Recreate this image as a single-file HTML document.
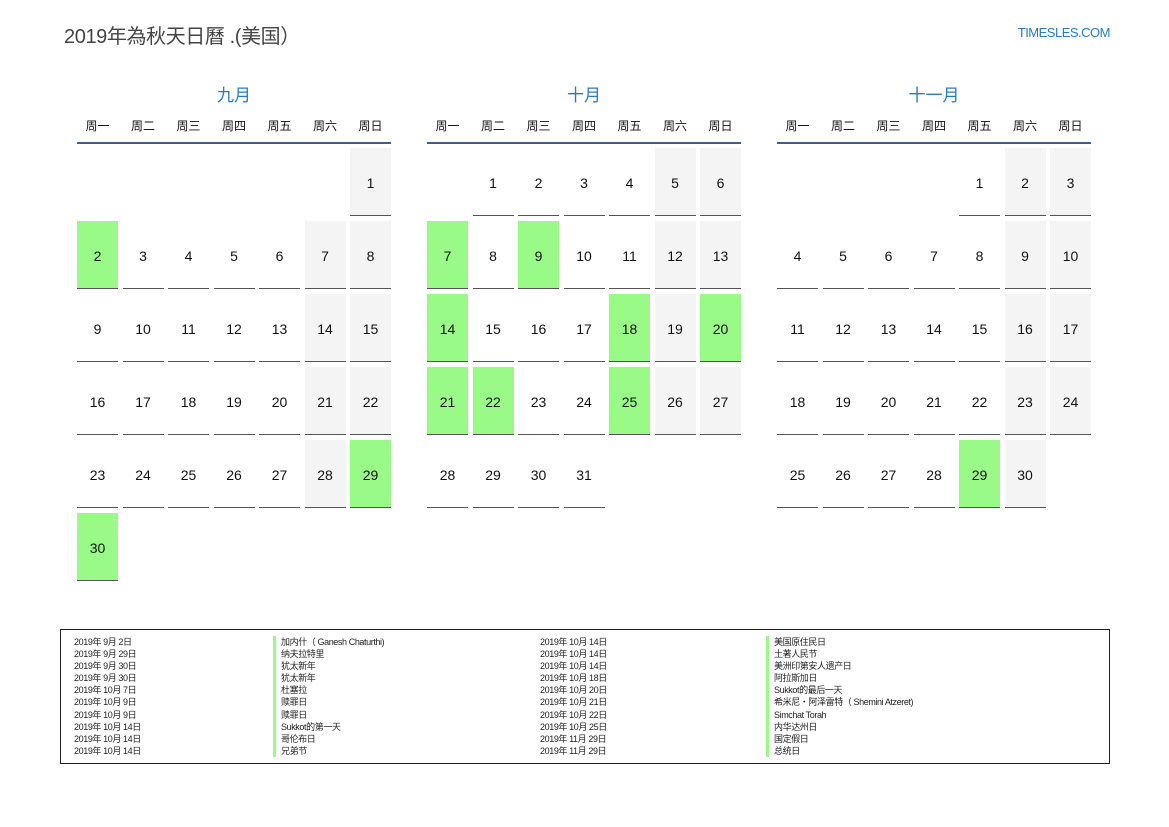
<!DOCTYPE html>
<html><head><meta charset="utf-8"><style>
*{margin:0;padding:0;box-sizing:border-box}
body{width:1169px;height:827px;background:#fff;font-family:"Liberation Sans","Noto Sans CJK SC",sans-serif;position:relative;overflow:hidden;color:#111}
.title{position:absolute;left:64px;top:20px;font-size:20px;color:#444;letter-spacing:-0.4px}
.site{position:absolute;right:59px;top:25px;font-size:13px;color:#2a7ac0;letter-spacing:-0.5px}
.m{position:absolute;top:84px;width:314px}
.mt{text-align:center;font-size:17px;color:#2a7ac0;height:24px;line-height:24px}
.wd{display:grid;grid-template-columns:repeat(7,41px);column-gap:4.5px;margin-top:10px;font-size:12px;text-align:center;height:16px;line-height:16px}
.ln{height:2px;background:#3d5f8a;margin-top:8px}
.g7{display:grid;grid-template-columns:repeat(7,41px);column-gap:4.5px;row-gap:5px;grid-auto-rows:68px;margin-top:4px}
.c{border-bottom:1.5px solid #555;display:flex;align-items:center;justify-content:center;font-size:14px;padding-top:2px}
.w{background:#f4f4f4}
.g{background:#99fa88}
.lg{position:absolute;left:60px;top:629px;width:1050px;height:135px;border:1px solid #222}
.col{position:absolute;top:6px;font-size:9px;line-height:12.1px;color:#222;letter-spacing:-0.4px}
.bar{border-left:3px solid #99fa88;padding-left:5px}
</style></head><body>
<div class="title">2019年為秋天日曆 .(美国）</div>
<div class="site">TIMESLES.COM</div>

<div class="m" style="left:77px">
<div class="mt">九月</div>
<div class="wd"><div>周一</div><div>周二</div><div>周三</div><div>周四</div><div>周五</div><div>周六</div><div>周日</div></div>
<div class="ln"></div>
<div class="g7">
<div></div><div></div><div></div><div></div><div></div><div></div><div class="c w">1</div>
<div class="c g">2</div><div class="c">3</div><div class="c">4</div><div class="c">5</div><div class="c">6</div><div class="c w">7</div><div class="c w">8</div>
<div class="c">9</div><div class="c">10</div><div class="c">11</div><div class="c">12</div><div class="c">13</div><div class="c w">14</div><div class="c w">15</div>
<div class="c">16</div><div class="c">17</div><div class="c">18</div><div class="c">19</div><div class="c">20</div><div class="c w">21</div><div class="c w">22</div>
<div class="c">23</div><div class="c">24</div><div class="c">25</div><div class="c">26</div><div class="c">27</div><div class="c w">28</div><div class="c g">29</div>
<div class="c g">30</div>
</div></div>

<div class="m" style="left:427px">
<div class="mt">十月</div>
<div class="wd"><div>周一</div><div>周二</div><div>周三</div><div>周四</div><div>周五</div><div>周六</div><div>周日</div></div>
<div class="ln"></div>
<div class="g7">
<div></div><div class="c">1</div><div class="c">2</div><div class="c">3</div><div class="c">4</div><div class="c w">5</div><div class="c w">6</div>
<div class="c g">7</div><div class="c">8</div><div class="c g">9</div><div class="c">10</div><div class="c">11</div><div class="c w">12</div><div class="c w">13</div>
<div class="c g">14</div><div class="c">15</div><div class="c">16</div><div class="c">17</div><div class="c g">18</div><div class="c w">19</div><div class="c g">20</div>
<div class="c g">21</div><div class="c g">22</div><div class="c">23</div><div class="c">24</div><div class="c g">25</div><div class="c w">26</div><div class="c w">27</div>
<div class="c">28</div><div class="c">29</div><div class="c">30</div><div class="c">31</div>
</div></div>

<div class="m" style="left:777px">
<div class="mt">十一月</div>
<div class="wd"><div>周一</div><div>周二</div><div>周三</div><div>周四</div><div>周五</div><div>周六</div><div>周日</div></div>
<div class="ln"></div>
<div class="g7">
<div></div><div></div><div></div><div></div><div class="c">1</div><div class="c w">2</div><div class="c w">3</div>
<div class="c">4</div><div class="c">5</div><div class="c">6</div><div class="c">7</div><div class="c">8</div><div class="c w">9</div><div class="c w">10</div>
<div class="c">11</div><div class="c">12</div><div class="c">13</div><div class="c">14</div><div class="c">15</div><div class="c w">16</div><div class="c w">17</div>
<div class="c">18</div><div class="c">19</div><div class="c">20</div><div class="c">21</div><div class="c">22</div><div class="c w">23</div><div class="c w">24</div>
<div class="c">25</div><div class="c">26</div><div class="c">27</div><div class="c">28</div><div class="c g">29</div><div class="c w">30</div>
</div></div>

<div class="lg">
<div class="col" style="left:13px">2019年 9月 2日<br>2019年 9月 29日<br>2019年 9月 30日<br>2019年 9月 30日<br>2019年 10月 7日<br>2019年 10月 9日<br>2019年 10月 9日<br>2019年 10月 14日<br>2019年 10月 14日<br>2019年 10月 14日</div>
<div class="col bar" style="left:212px">加内什（ Ganesh Chaturthi)<br>纳夫拉特里<br>犹太新年<br>犹太新年<br>杜塞拉<br>赎罪日<br>赎罪日<br>Sukkot的第一天<br>哥伦布日<br>兄弟节</div>
<div class="col" style="left:479px">2019年 10月 14日<br>2019年 10月 14日<br>2019年 10月 14日<br>2019年 10月 18日<br>2019年 10月 20日<br>2019年 10月 21日<br>2019年 10月 22日<br>2019年 10月 25日<br>2019年 11月 29日<br>2019年 11月 29日</div>
<div class="col bar" style="left:705px">美国原住民日<br>土著人民节<br>美洲印第安人遗产日<br>阿拉斯加日<br>Sukkot的最后一天<br>希米尼・阿泽雷特（ Shemini Atzeret)<br>Simchat Torah<br>内华达州日<br>国定假日<br>总统日</div>
</div>
</body></html>
